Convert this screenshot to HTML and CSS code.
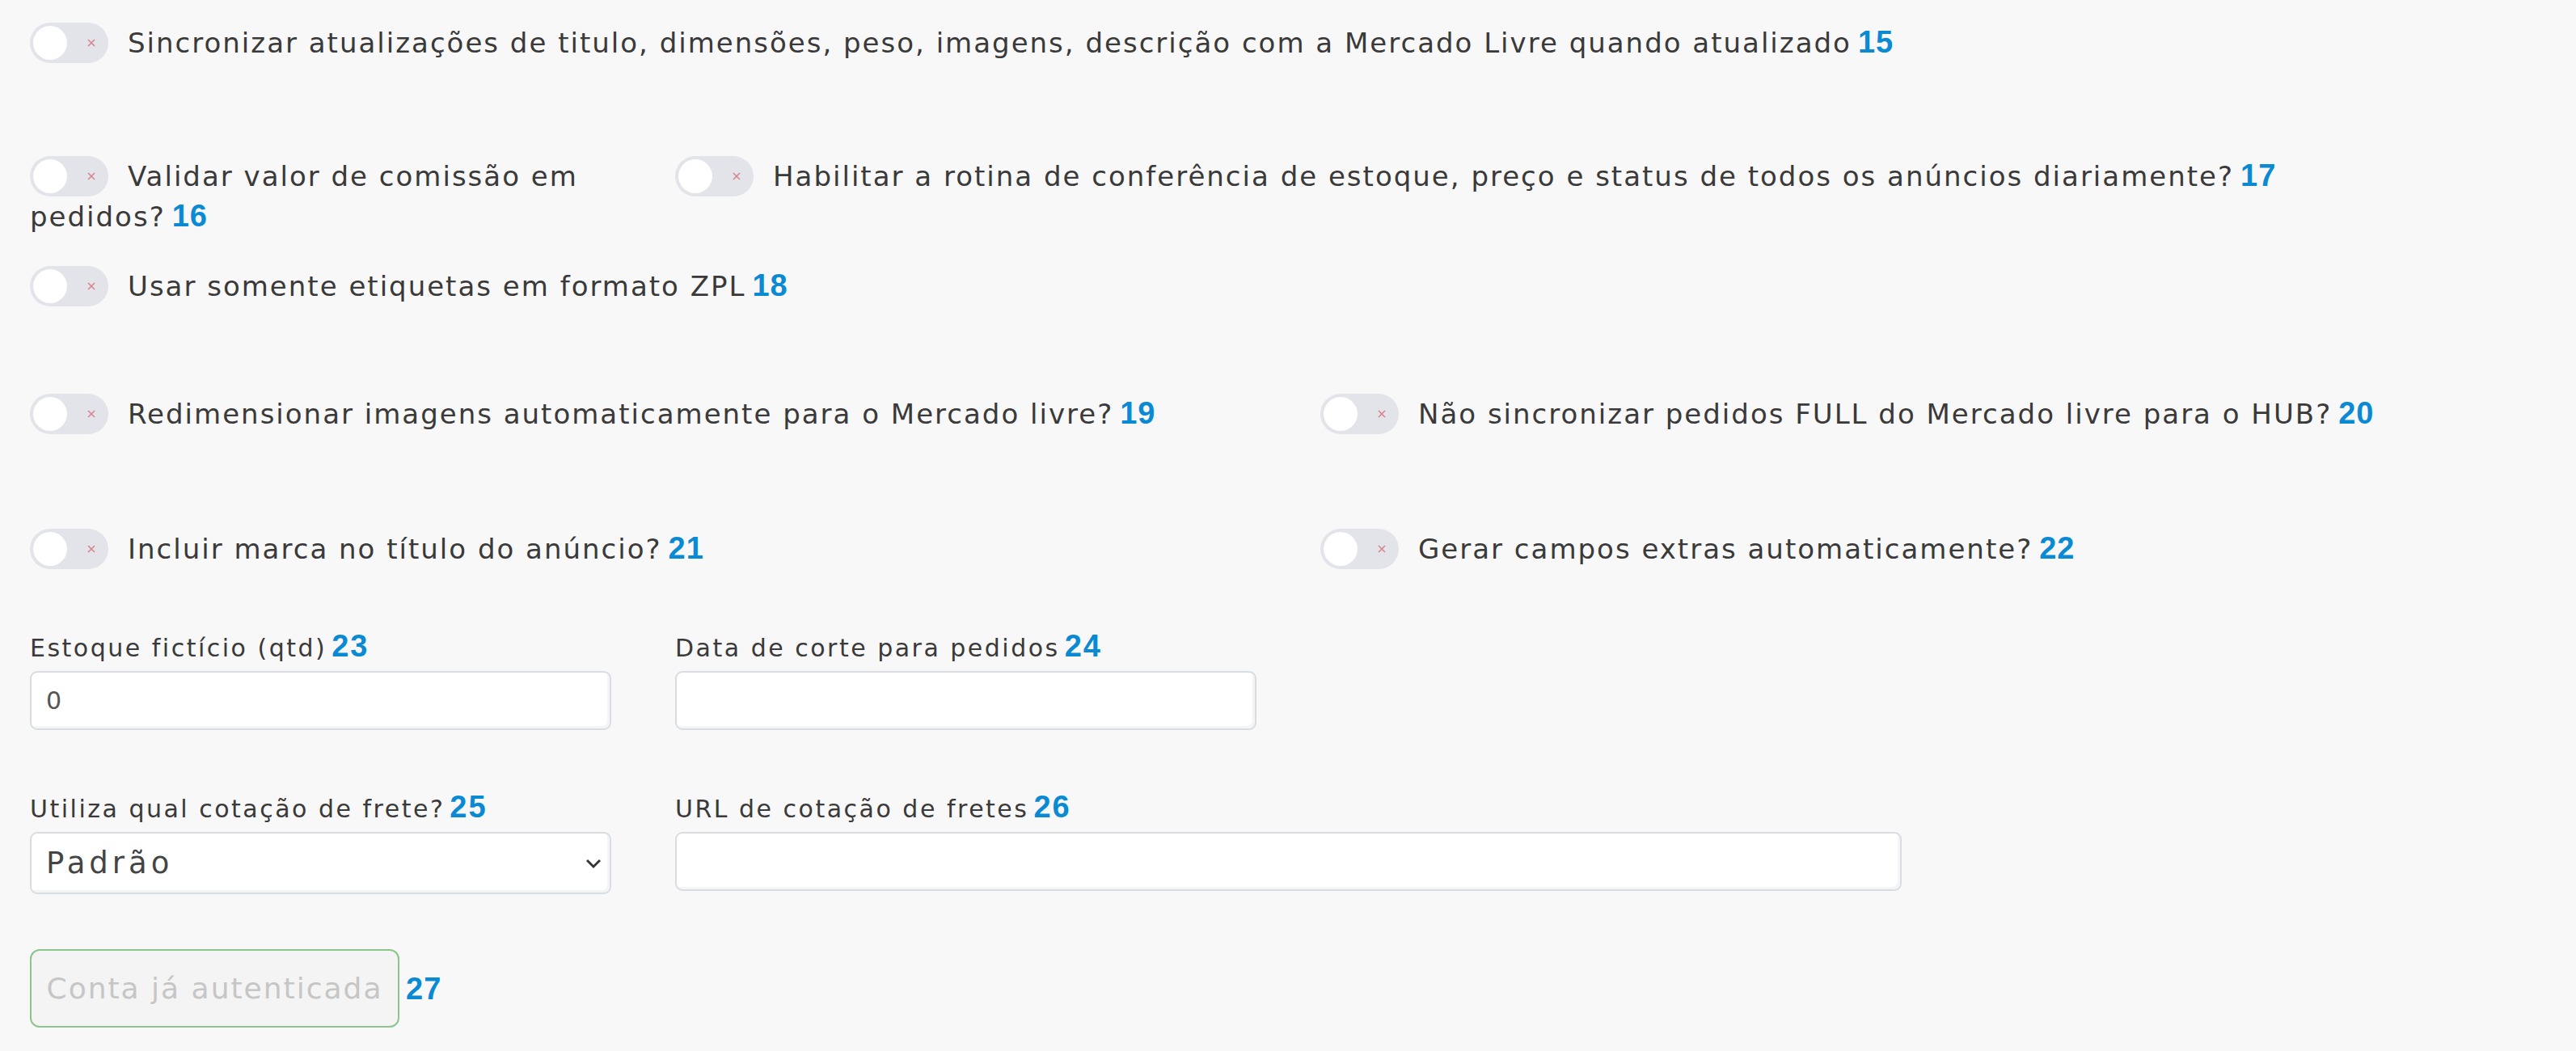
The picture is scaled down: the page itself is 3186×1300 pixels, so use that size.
FILE: index.html
```html
<!DOCTYPE html>
<html lang="pt-BR">
<head>
    <meta charset="UTF-8">
    <title>Configurações Mercado Livre</title>
    <link rel="stylesheet" href="styles.css">
</head>
<body>

<form class="settings">

    <div class="row row-first">
        <label class="field span-4">
            <span class="switch"><span class="knob"></span><svg class="off" width="12" height="12" viewBox="0 0 12 12"><path d="M2 2l8 8M10 2l-8 8"/></svg></span>Sincronizar atualizações de titulo, dimensões, peso, imagens, descrição com a Mercado Livre quando atualizado<b class="num">15</b>
        </label>
    </div>

    <div class="row row-second">
        <label class="field">
            <span class="switch"><span class="knob"></span><svg class="off" width="12" height="12" viewBox="0 0 12 12"><path d="M2 2l8 8M10 2l-8 8"/></svg></span>Validar valor de comissão em pedidos?<b class="num">16</b>
        </label>
        <label class="field span-3">
            <span class="switch"><span class="knob"></span><svg class="off" width="12" height="12" viewBox="0 0 12 12"><path d="M2 2l8 8M10 2l-8 8"/></svg></span>Habilitar a rotina de conferência de estoque, preço e status de todos os anúncios diariamente?<b class="num">17</b>
        </label>
    </div>

    <div class="row row-third">
        <label class="field span-4">
            <span class="switch"><span class="knob"></span><svg class="off" width="12" height="12" viewBox="0 0 12 12"><path d="M2 2l8 8M10 2l-8 8"/></svg></span>Usar somente etiquetas em formato ZPL<b class="num">18</b>
        </label>
    </div>

    <div class="row row-fourth">
        <label class="field span-2">
            <span class="switch"><span class="knob"></span><svg class="off" width="12" height="12" viewBox="0 0 12 12"><path d="M2 2l8 8M10 2l-8 8"/></svg></span>Redimensionar imagens automaticamente para o Mercado livre?<b class="num">19</b>
        </label>
        <label class="field span-2">
            <span class="switch"><span class="knob"></span><svg class="off" width="12" height="12" viewBox="0 0 12 12"><path d="M2 2l8 8M10 2l-8 8"/></svg></span>Não sincronizar pedidos FULL do Mercado livre para o HUB?<b class="num">20</b>
        </label>
    </div>

    <div class="row row-fifth">
        <label class="field span-2">
            <span class="switch"><span class="knob"></span><svg class="off" width="12" height="12" viewBox="0 0 12 12"><path d="M2 2l8 8M10 2l-8 8"/></svg></span>Incluir marca no título do anúncio?<b class="num">21</b>
        </label>
        <label class="field span-2">
            <span class="switch"><span class="knob"></span><svg class="off" width="12" height="12" viewBox="0 0 12 12"><path d="M2 2l8 8M10 2l-8 8"/></svg></span>Gerar campos extras automaticamente?<b class="num">22</b>
        </label>
    </div>

    <div class="row row-inputs first-inputs">
        <div class="group">
            <label class="caption" for="estoque">Estoque fictício (qtd)<b class="num">23</b></label>
            <input class="input" type="text" id="estoque" value="0">
        </div>
        <div class="group">
            <label class="caption" for="corte">Data de corte para pedidos<b class="num">24</b></label>
            <input class="input" type="text" id="corte">
        </div>
    </div>

    <div class="row row-inputs">
        <div class="group">
            <label class="caption" for="cotacao">Utiliza qual cotação de frete?<b class="num">25</b></label>
            <div class="select-wrap">
                <select class="input select" id="cotacao">
                    <option>Padrão</option>
                </select>
                <svg class="chevron" width="20" height="13" viewBox="0 0 20 13"><path d="M2 2l8 8 8-8" fill="none" stroke="#333" stroke-width="2.8"/></svg>
            </div>
        </div>
        <div class="group span-2">
            <label class="caption" for="url">URL de cotação de fretes<b class="num">26</b></label>
            <input class="input" type="text" id="url">
        </div>
    </div>

    <div class="actions">
        <button type="button" class="btn-auth" disabled>Conta já autenticada</button>
        <b class="num">27</b>
    </div>

</form>

</body>
</html>
```

FILE: styles.css
```css
/* base */
body {
    margin: 0;
    background-color: #f8f8f8;
    font-family: "DejaVu Sans", sans-serif;
    color: #3a3a3a;
}

.settings {
    padding: 28px 36px 0 37px;
}

/* grid rows */
.row {
    display: grid;
    grid-template-columns: repeat(4, 719px);
    column-gap: 79px;
}

.span-2 { grid-column: span 2; }
.span-3 { grid-column: span 3; }
.span-4 { grid-column: span 4; }

.row-first { margin-bottom: 115px; }
.row-second { margin-bottom: 36px; }
.row-third { margin-bottom: 108px; }
.row-fourth { margin-bottom: 117px; }
.row-fifth { margin-bottom: 76px; }
.row-inputs { margin-bottom: 68px; }
.first-inputs { margin-bottom: 76px; }

/* toggle fields */
.field {
    font-size: 34px;
    line-height: 50px;
    letter-spacing: 2px;
}

.switch {
    display: inline-block;
    vertical-align: top;
    position: relative;
    width: 97px;
    height: 50px;
    margin-right: 24px;
    border-radius: 25px;
    background-color: #e2e4e9;
}

.knob {
    position: absolute;
    left: 4px;
    top: 4px;
    width: 42px;
    height: 42px;
    border-radius: 50%;
    background-color: #fff;
}

.off {
    position: absolute;
    left: 70px;
    top: 19px;
    fill: none;
    stroke: #d8848d;
    stroke-width: 1.6;
}

.num {
    margin-left: 8px;
    font-family: "Liberation Sans", Arial, sans-serif;
    font-weight: bold;
    font-size: 38px;
    line-height: 1;
    letter-spacing: 1px;
    color: #0b8ad4;
}

/* inputs */
.group {
    display: flex;
    flex-direction: column;
}

.caption {
    font-size: 30px;
    line-height: 40px;
    letter-spacing: 2.5px;
    margin-bottom: 8px;
}

.caption .num {
    margin-left: 6px;
    letter-spacing: 2px;
}

.input {
    box-sizing: border-box;
    height: 73px;
    width: 100%;
    padding: 0 18px;
    border: 2px solid #d9dce1;
    border-radius: 9px;
    background-color: #fff;
    box-shadow: inset -3px -3px 0 #f4f5f6;
    font-family: "DejaVu Sans", sans-serif;
    font-size: 30px;
    color: #555;
}

.select-wrap {
    position: relative;
}

.select {
    height: 77px;
    font-size: 37px;
    letter-spacing: 5px;
    color: #444;
    appearance: none;
    -webkit-appearance: none;
}

.chevron {
    position: absolute;
    right: 12px;
    top: 33px;
}

/* button */
.actions {
    display: flex;
    align-items: center;
}

.btn-auth {
    width: 457px;
    height: 97px;
    border: 2px solid #8cc58b;
    border-radius: 12px;
    background-color: #f4f4f4;
    color: #c6c6c6;
    font-family: "DejaVu Sans", sans-serif;
    font-size: 36px;
    letter-spacing: 2px;
    padding: 0;
}
```
